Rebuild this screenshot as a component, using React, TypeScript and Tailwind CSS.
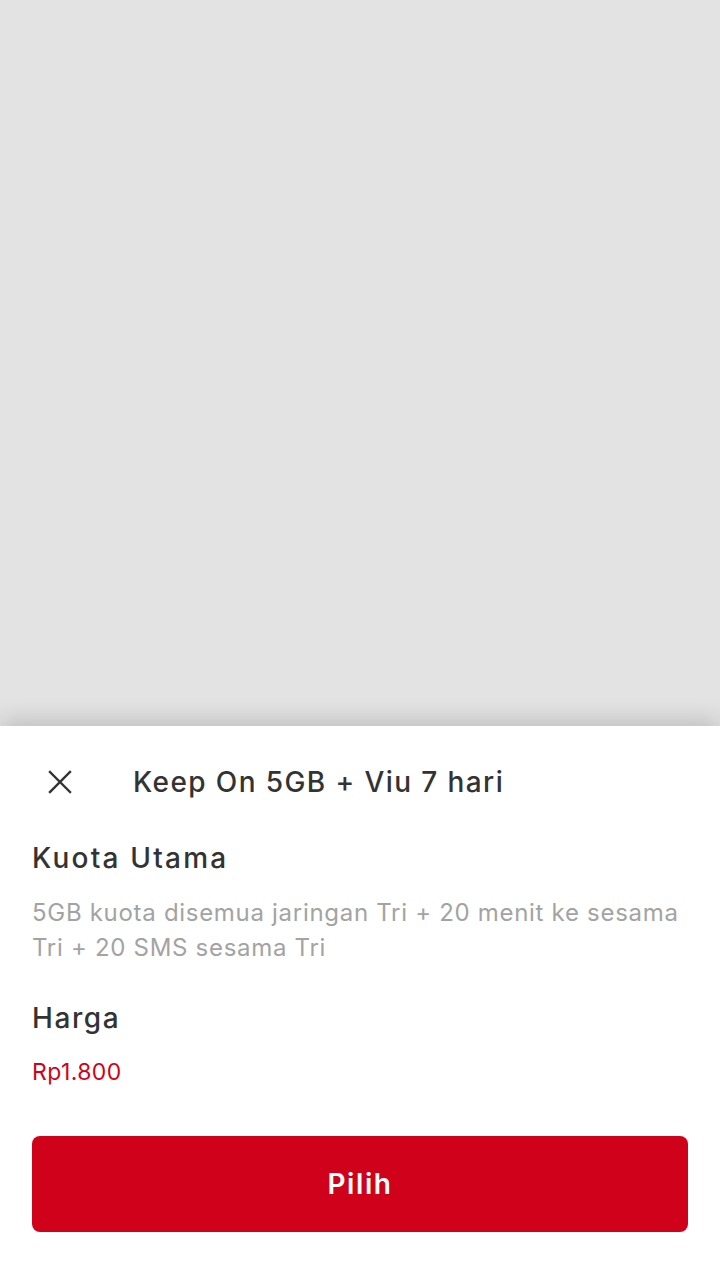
const CloseIcon = () => (
  <svg width="24" height="24" viewBox="0 0 24 24" fill="none" stroke="#333333" strokeWidth="2.4" strokeLinecap="square">
    <path d="M2 2L22 22M22 2L2 22" />
  </svg>
);

const App = () => {
  return (
    <div className="flex h-screen w-full flex-col font-['Inter',sans-serif]">
      {/* backdrop */}
      <div className="flex-1 bg-[#e3e3e3]" />

      {/* bottom sheet */}
      <div className="relative h-[554px] bg-white px-8 pt-7 shadow-[0_-6px_22px_rgba(0,0,0,0.16)]">
        <div className="flex h-14 items-center">
          <button className="ml-4 flex h-6 w-6 items-center justify-center">
            <CloseIcon />
          </button>
          <h2 className="ml-[61px] text-[28px] leading-10 font-medium tracking-[1.4px] text-[#333333]">
            Keep On 5GB + Viu 7 hari
          </h2>
        </div>

        <h3 className="mt-7 text-[28px] leading-10 font-medium tracking-[2.2px] text-[#333333]">Kuota Utama</h3>
        <p className="mt-[17px] text-[24px] leading-[35px] tracking-[0.7px] text-[#a3a3a3]">
          5GB kuota disemua jaringan Tri + 20 menit ke sesama Tri + 20 SMS sesama Tri
        </p>

        <h3 className="mt-[33px] text-[28px] leading-10 font-medium tracking-[1.6px] text-[#333333]">Harga</h3>
        <span className="mt-[17px] block text-[23px] leading-[35px] tracking-[0.4px] text-[#d0021b]">Rp1.800</span>

        <button className="mt-[46px] flex h-24 w-full items-center justify-center rounded-lg bg-[#d0021b] text-[28px] font-semibold tracking-[1.6px] text-white">
          Pilih
        </button>
      </div>
    </div>
  );
};

export default App;
